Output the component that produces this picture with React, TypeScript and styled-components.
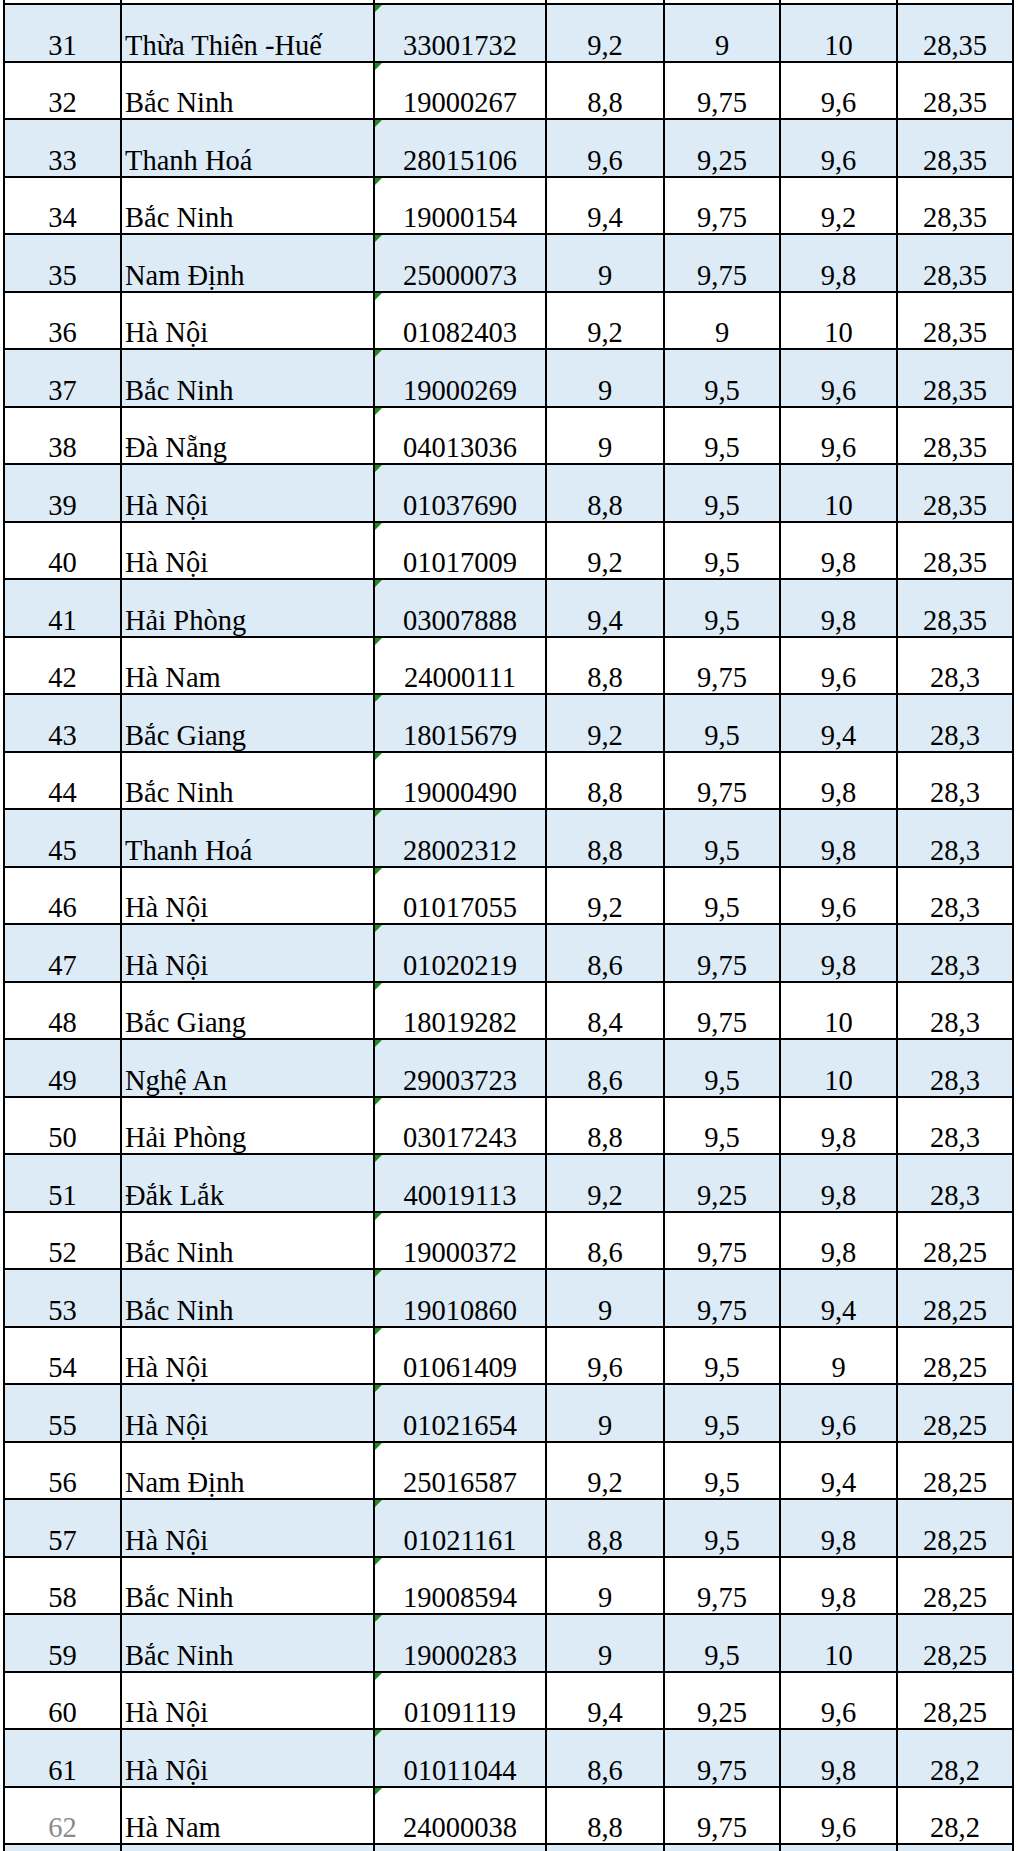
import React from 'react';
import styled, {createGlobalStyle} from 'styled-components';

const GlobalStyle = createGlobalStyle`
  html, body {
    margin: 0;
    padding: 0;
    background: #ffffff;
  }
  body {
    font-family: "Liberation Serif", "Times New Roman", serif;
    color: #000;
  }
`;

const Sheet = styled.div`
  width: 1020px;
  height: 1851px;
  overflow: hidden;
  background: #fff;
`;

const Grid = styled.div`
  margin-left: 3px;
  display: grid;
  grid-template-columns: 117px 253px 172px 118px 116px 117px 116px;
  border-left: 2px solid #000;
  width: max-content;
`;

const Cell = styled.div<{$shade: boolean; $h: number; $align: 'left' | 'center'; $faded?: boolean}>`
  box-sizing: border-box;
  position: relative;
  height: ${(p) => p.$h}px;
  border-right: 2px solid #000;
  border-bottom: 2px solid #000;
  background: ${(p) => (p.$shade ? '#ddebf7' : '#ffffff')};
  display: flex;
  align-items: flex-end;
  justify-content: ${(p) => (p.$align === 'left' ? 'flex-start' : 'center')};
  padding: 0 0 1px ${(p) => (p.$align === 'left' ? '3px' : '0')};
  font-size: 28.5px;
  line-height: 1;
  white-space: nowrap;
  color: ${(p) => (p.$faded ? '#8a8a8a' : '#000')};
`;

// little green "number stored as text" marker excel puts on the code column
const CodeCell = styled(Cell)`
  &::before {
    content: '';
    position: absolute;
    left: 0;
    top: 0;
    width: 0;
    height: 0;
    border-top: 7px solid #1e8c1e;
    border-right: 7px solid transparent;
  }
`;

const Strip = styled.div<{$h: number; $shade: boolean; $line: boolean}>`
  box-sizing: border-box;
  height: ${(p) => p.$h}px;
  background: ${(p) => (p.$shade ? '#ddebf7' : '#ffffff')};
  border-right: 2px solid #000;
  border-bottom: ${(p) => (p.$line ? '2px solid #000' : 'none')};
`;

type Row = [number, string, string, string, string, string, string];

const rows: Row[] = [
  [31, 'Thừa Thiên -Huế', '33001732', '9,2', '9', '10', '28,35'],
  [32, 'Bắc Ninh', '19000267', '8,8', '9,75', '9,6', '28,35'],
  [33, 'Thanh Hoá', '28015106', '9,6', '9,25', '9,6', '28,35'],
  [34, 'Bắc Ninh', '19000154', '9,4', '9,75', '9,2', '28,35'],
  [35, 'Nam Định', '25000073', '9', '9,75', '9,8', '28,35'],
  [36, 'Hà Nội', '01082403', '9,2', '9', '10', '28,35'],
  [37, 'Bắc Ninh', '19000269', '9', '9,5', '9,6', '28,35'],
  [38, 'Đà Nẵng', '04013036', '9', '9,5', '9,6', '28,35'],
  [39, 'Hà Nội', '01037690', '8,8', '9,5', '10', '28,35'],
  [40, 'Hà Nội', '01017009', '9,2', '9,5', '9,8', '28,35'],
  [41, 'Hải Phòng', '03007888', '9,4', '9,5', '9,8', '28,35'],
  [42, 'Hà Nam', '24000111', '8,8', '9,75', '9,6', '28,3'],
  [43, 'Bắc Giang', '18015679', '9,2', '9,5', '9,4', '28,3'],
  [44, 'Bắc Ninh', '19000490', '8,8', '9,75', '9,8', '28,3'],
  [45, 'Thanh Hoá', '28002312', '8,8', '9,5', '9,8', '28,3'],
  [46, 'Hà Nội', '01017055', '9,2', '9,5', '9,6', '28,3'],
  [47, 'Hà Nội', '01020219', '8,6', '9,75', '9,8', '28,3'],
  [48, 'Bắc Giang', '18019282', '8,4', '9,75', '10', '28,3'],
  [49, 'Nghệ An', '29003723', '8,6', '9,5', '10', '28,3'],
  [50, 'Hải Phòng', '03017243', '8,8', '9,5', '9,8', '28,3'],
  [51, 'Đắk Lắk', '40019113', '9,2', '9,25', '9,8', '28,3'],
  [52, 'Bắc Ninh', '19000372', '8,6', '9,75', '9,8', '28,25'],
  [53, 'Bắc Ninh', '19010860', '9', '9,75', '9,4', '28,25'],
  [54, 'Hà Nội', '01061409', '9,6', '9,5', '9', '28,25'],
  [55, 'Hà Nội', '01021654', '9', '9,5', '9,6', '28,25'],
  [56, 'Nam Định', '25016587', '9,2', '9,5', '9,4', '28,25'],
  [57, 'Hà Nội', '01021161', '8,8', '9,5', '9,8', '28,25'],
  [58, 'Bắc Ninh', '19008594', '9', '9,75', '9,8', '28,25'],
  [59, 'Bắc Ninh', '19000283', '9', '9,5', '10', '28,25'],
  [60, 'Hà Nội', '01091119', '9,4', '9,25', '9,6', '28,25'],
  [61, 'Hà Nội', '01011044', '8,6', '9,75', '9,8', '28,2'],
  [62, 'Hà Nam', '24000038', '8,8', '9,75', '9,6', '28,2'],
];

const ROW_H = 57.5;
const TOP = 5;

// integer heights so the borders stay crisp
const heightOf = (i: number) => Math.round(TOP + (i + 1) * ROW_H) - Math.round(TOP + i * ROW_H);

const App = () => {
  return (
    <>
      <GlobalStyle />
      <Sheet>
        <Grid>
          {Array.from({length: 7}).map((_, c) => (
            <Strip key={'top' + c} $h={TOP} $shade={false} $line />
          ))}
          {rows.map((r, i) => {
            const shade = r[0] % 2 === 1;
            const h = heightOf(i);
            return (
              <React.Fragment key={r[0]}>
                <Cell $shade={shade} $h={h} $align="center" $faded={r[0] === 62}>
                  {r[0]}
                </Cell>
                <Cell $shade={shade} $h={h} $align="left">
                  {r[1]}
                </Cell>
                <CodeCell $shade={shade} $h={h} $align="center">
                  {r[2]}
                </CodeCell>
                <Cell $shade={shade} $h={h} $align="center">
                  {r[3]}
                </Cell>
                <Cell $shade={shade} $h={h} $align="center">
                  {r[4]}
                </Cell>
                <Cell $shade={shade} $h={h} $align="center">
                  {r[5]}
                </Cell>
                <Cell $shade={shade} $h={h} $align="center">
                  {r[6]}
                </Cell>
              </React.Fragment>
            );
          })}
          {Array.from({length: 7}).map((_, c) => (
            <Strip key={'bottom' + c} $h={20} $shade $line={false} />
          ))}
        </Grid>
      </Sheet>
    </>
  );
};

export default App;
